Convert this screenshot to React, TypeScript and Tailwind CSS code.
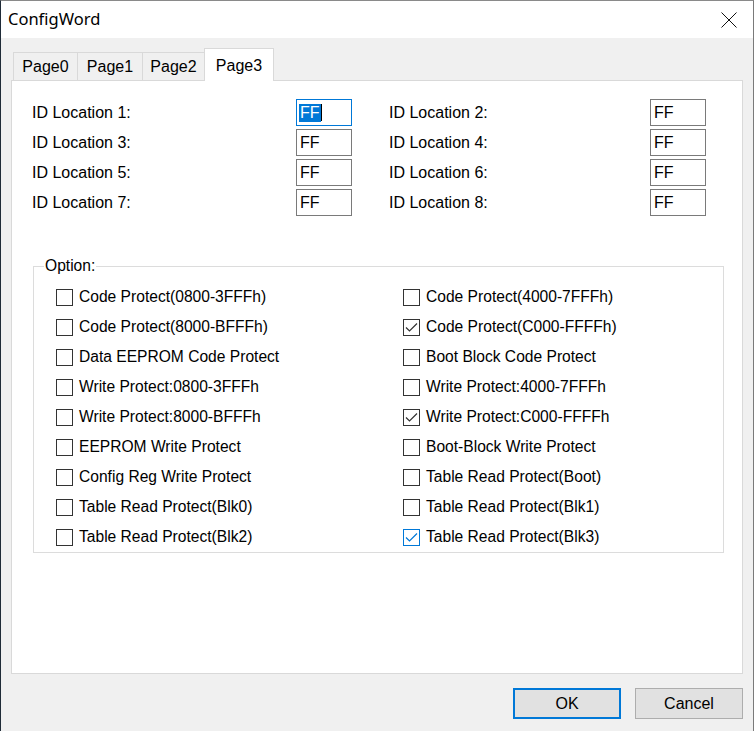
import React from "react";

const font = { fontFamily: '"Liberation Sans", Arial, sans-serif' };

function IdInput({ focused }: { focused?: boolean }) {
  return (
    <div
      className={
        "w-[56px] h-[27px] bg-white border flex items-center pl-[2px] text-[16px] leading-[18px] text-black " +
        (focused ? "border-[#0078d7]" : "border-[#7a7a7a]")
      }
    >
      {focused ? (
        <span className="flex items-center">
          <span className="bg-[#0078d7] text-white px-[1px]">FF</span>
          <span className="w-[1px] h-[17px] bg-black" />
        </span>
      ) : (
        <span className="px-[1px]">FF</span>
      )}
    </div>
  );
}

function Check({ checked, hover, label }: { checked?: boolean; hover?: boolean; label: string }) {
  const color = hover ? "#0078d7" : "#333333";
  return (
    <div className="h-[30px] flex items-center">
      <div
        className={
          "w-[17px] h-[17px] border bg-white flex items-center justify-center " +
          (hover ? "border-[#0078d7]" : "border-[#333333]")
        }
      >
        {checked && (
          <svg width="15" height="15" viewBox="0 0 15 15">
            <path d="M2 7.5 L5.5 11 L13 3.5" fill="none" stroke={color} strokeWidth="1.2" />
          </svg>
        )}
      </div>
      <span className="ml-[6px] text-[15.6px] leading-[18px] text-black whitespace-nowrap">{label}</span>
    </div>
  );
}

const rows: [string, string][] = [
  ["ID Location 1:", "ID Location 2:"],
  ["ID Location 3:", "ID Location 4:"],
  ["ID Location 5:", "ID Location 6:"],
  ["ID Location 7:", "ID Location 8:"],
];

const checks: { left: string; right: string; lc?: boolean; rc?: boolean; rh?: boolean }[] = [
  { left: "Code Protect(0800-3FFFh)", right: "Code Protect(4000-7FFFh)" },
  { left: "Code Protect(8000-BFFFh)", right: "Code Protect(C000-FFFFh)", rc: true },
  { left: "Data EEPROM Code Protect", right: "Boot Block Code Protect" },
  { left: "Write Protect:0800-3FFFh", right: "Write Protect:4000-7FFFh" },
  { left: "Write Protect:8000-BFFFh", right: "Write Protect:C000-FFFFh", rc: true },
  { left: "EEPROM Write Protect", right: "Boot-Block Write Protect" },
  { left: "Config Reg Write Protect", right: "Table Read Protect(Boot)" },
  { left: "Table Read Protect(Blk0)", right: "Table Read Protect(Blk1)" },
  { left: "Table Read Protect(Blk2)", right: "Table Read Protect(Blk3)", rc: true, rh: true },
];

export default function App() {
  const tabs = [
    { name: "Page0", w: "w-[65px]" },
    { name: "Page1", w: "w-[66px] -ml-[1px]" },
    { name: "Page2", w: "w-[63px] -ml-[1px]" },
  ];
  return (
    <div
      className="w-[754px] h-[731px] bg-[#f0f0f0] border-t border-t-[#8a8a8a] border-l border-l-[#1f2b38] border-r border-r-[#7a7a7a] flex flex-col overflow-hidden"
      style={font}
    >
      {/* Title bar */}
      <div className="h-[37px] bg-white flex items-center justify-between pl-[7px] pr-[16px]">
        <span
          className="text-[16.5px] text-black"
          style={{ fontFamily: '"Noto Sans", "Open Sans", sans-serif' }}
        >
          ConfigWord
        </span>
        <svg width="16" height="16" viewBox="0 0 16 16">
          <path d="M0.5 0.5 L15.5 15.5 M15.5 0.5 L0.5 15.5" stroke="#111" strokeWidth="1" fill="none" />
        </svg>
      </div>

      {/* Tab control */}
      <div className="ml-[10px] mt-[10px] w-[732px] flex flex-col">
        <div className="h-[33px] flex items-start pl-[2px] -mb-[1px] relative z-10">
          {tabs.map((t) => (
            <div
              key={t.name}
              className={
                "mt-[4px] h-[28px] bg-[#f0f0f0] border border-b-0 border-[#d9d9d9] flex items-center justify-center text-[16px] text-black " +
                t.w
              }
            >
              {t.name}
            </div>
          ))}
          <div className="h-[33px] w-[70px] -ml-[1px] bg-white border border-b-0 border-[#d9d9d9] flex items-start justify-center pt-[5px] text-[16px] text-black">
            Page3
          </div>
        </div>

        <div className="h-[594px] bg-white border border-[#d9d9d9] pt-[18px] pl-[20px]">
          <div className="flex flex-col gap-[3px]">
            {rows.map(([l, r], i) => (
              <div key={l} className="flex items-center h-[27px] text-[16px] text-black">
                <span className="w-[264px]">{l}</span>
                <IdInput focused={i === 0} />
                <span className="ml-[37px] w-[261px]">{r}</span>
                <IdInput />
              </div>
            ))}
          </div>

          <fieldset className="mt-[41px] ml-[1px] w-[691px] border border-[#dcdcdc] pt-[7px] pl-[22px]">
            <legend className="-ml-[12px] px-[1px] text-[15.6px] leading-[18px] text-black">Option:</legend>
            <div className="grid grid-cols-[347px_1fr]">
              {checks.map((c) => (
                <React.Fragment key={c.left}>
                  <Check label={c.left} checked={c.lc} />
                  <Check label={c.right} checked={c.rc} hover={c.rh} />
                </React.Fragment>
              ))}
            </div>
          </fieldset>
        </div>
      </div>

      {/* Buttons */}
      <div className="mt-[14px] flex justify-end gap-[14px] pr-[10px]">
        <div className="w-[108px] h-[31px] bg-[#e1e1e1] border-2 border-[#0078d7] flex items-center justify-center text-[16px] text-black">
          OK
        </div>
        <div className="w-[108px] h-[31px] bg-[#e1e1e1] border border-[#adadad] flex items-center justify-center text-[16px] text-black">
          Cancel
        </div>
      </div>
    </div>
  );
}
